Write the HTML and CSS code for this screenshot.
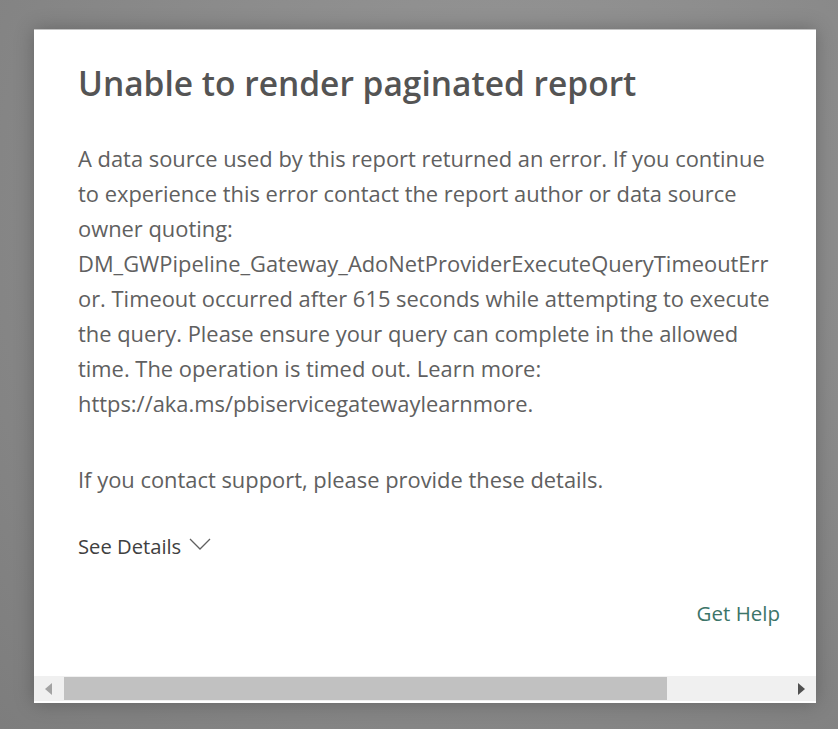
FILE: index.html
```html
<!DOCTYPE html>
<html>
    <head>
        <title>Unable to render paginated report</title>
        <link rel="stylesheet" href="styles.css">
    </head>
    <body>
        <div class="dialog">
            <div class="dialog-content">
                <p class="title">Unable to render paginated report</p>
                <p class="message">
                    A data source used by this report returned an error. If you continue<br>
                    to experience this error contact the report author or data source<br>
                    owner quoting:<br>
                    DM_GWPipeline_Gateway_AdoNetProviderExecuteQueryTimeoutErr<br>
                    or. Timeout occurred after 615 seconds while attempting to execute<br>
                    the query. Please ensure your query can complete in the allowed<br>
                    time. The operation is timed out. Learn more:<br>
                    https://aka.ms/pbiservicegatewaylearnmore.
                </p>
                <p class="support">If you contact support, please provide these details.</p>
                <button class="details-button">
                    See Details
                    <svg class="chevron" width="22" height="12" viewBox="0 0 22 12">
                        <path d="M1 1 L11 11 L21 1" fill="none" stroke="#606060" stroke-width="1.3"/>
                    </svg>
                </button>
                <div class="help-row">
                    <a class="help-link">Get Help</a>
                </div>
            </div>
            <div class="scrollbar">
                <span class="arrow arrow-left"></span>
                <div class="scroll-track">
                    <div class="scroll-thumb"></div>
                </div>
                <span class="arrow arrow-right"></span>
            </div>
        </div>
    </body>
</html>
```

FILE: styles.css
```css
body {
    margin: 0;
    width: 838px;
    height: 729px;
    background: radial-gradient(ellipse at 60% 30%, #999999, #7d7d7d);
    font-family: "Open Sans", "Noto Sans", Arial, sans-serif;
    padding: 29px 0 0 34px;
    box-sizing: border-box;
    overflow: hidden;
}

.dialog {
    width: 782px;
    height: 674px;
    background-color: white;
    border-top: 1px solid #c4c4c4;
    box-shadow: 0 0 18px rgba(0, 0, 0, 0.25);
    display: flex;
    flex-direction: column;
    box-sizing: border-box;
}

.dialog-content {
    flex: 1;
    padding: 0 36px 0 44px;
    display: flex;
    flex-direction: column;
}

.title {
    font-size: 33.5px;
    font-weight: 600;
    color: #545454;
    margin: 33px 0 0 0;
    line-height: 40px;
    white-space: nowrap;
}

.message {
    font-size: 21.9px;
    line-height: 35px;
    color: #606060;
    margin: 38px 0 0 0;
    white-space: nowrap;
}

.support {
    font-size: 21.9px;
    line-height: 35px;
    color: #606060;
    margin: 41px 0 0 0;
}

.details-button {
    align-self: flex-start;
    background: transparent;
    border: none;
    padding: 0;
    margin-top: 35px;
    font-family: inherit;
    font-size: 20.2px;
    color: #404040;
    display: flex;
    align-items: center;
    gap: 8px;
    cursor: pointer;
}

.chevron {
    margin-top: -4px;
}

.help-row {
    display: flex;
    justify-content: flex-end;
    margin-top: 39px;
}

.help-link {
    font-size: 20.5px;
    color: #3c7569;
    cursor: pointer;
}

.scrollbar {
    height: 25px;
    background-color: #f0f0f0;
    display: flex;
    align-items: center;
    margin-bottom: 2px;
}

.scroll-track {
    flex: 1;
    height: 23px;
    margin: 0 4px;
}

.scroll-thumb {
    width: 603px;
    height: 100%;
    background-color: #c1c1c1;
}

.arrow {
    width: 0;
    height: 0;
    border-top: 6px solid transparent;
    border-bottom: 6px solid transparent;
}

.arrow-left {
    border-right: 7px solid #a3a3a3;
    margin-left: 11px;
    margin-right: 8px;
}

.arrow-right {
    border-left: 7px solid #505050;
    margin-left: 120px;
    margin-right: 11px;
}
```
